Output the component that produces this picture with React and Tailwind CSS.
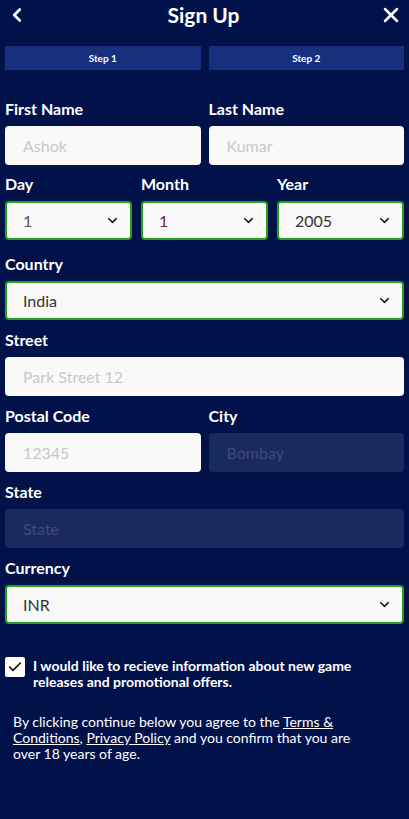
import { ChevronLeft, ChevronDown, X, Check } from 'lucide-react'

// Simple text field, optionally disabled (dark)
const Field = ({ label, placeholder, disabled }) => (
  <div className="flex-1 min-w-0">
    <label className="block text-[16px] leading-[20px] font-bold text-white mb-[7px]">{label}</label>
    <div
      className={
        'h-[39px] rounded-[4px] flex items-center pl-[18px] text-[16px] ' +
        (disabled ? 'bg-[#1a2a5f] text-[#3b4b7c]' : 'bg-[#f9f9f9] text-[#c9c9c9]')
      }
    >
      {placeholder}
    </div>
  </div>
)

// Select box with green border
const SelectBox = ({ label, value, color = 'text-[#333333]' }) => (
  <div className="flex-1 min-w-0">
    <label className="block text-[16px] leading-[20px] font-bold text-white mb-[7px]">{label}</label>
    <div className="h-[39px] rounded-[4px] border-2 border-[#27a11c] bg-[#f9f9f9] flex items-center justify-between pl-[16px] pr-[10px]">
      <span className={'text-[16px] ' + color}>{value}</span>
      <ChevronDown size={15} strokeWidth={2.5} className="text-[#222]" />
    </div>
  </div>
)

const App = () => {
  return (
    <div
      className="w-[409px] min-h-[819px] bg-[#01124b] text-white"
      style={{ fontFamily: 'Lato, "Noto Sans", sans-serif' }}
    >
      <div className="flex items-center justify-between h-[28px] pt-[2px] px-[6px]">
        <ChevronLeft size={22} strokeWidth={3} />
        <h1 className="text-[21px] font-bold">Sign Up</h1>
        <X size={24} strokeWidth={2.5} />
      </div>

      <div className="flex gap-[8px] px-[5px] mt-[18px]">
        <div className="flex-1 h-[24px] bg-[#16307e] flex items-center justify-center text-[10px] font-bold">Step 1</div>
        <div className="flex-1 h-[24px] bg-[#16307e] flex items-center justify-center text-[10px] font-bold">Step 2</div>
      </div>

      <form className="px-[5px] mt-[29px] flex flex-col">
        <div className="flex gap-[8px] mb-[9px]">
          <Field label="First Name" placeholder="Ashok" />
          <Field label="Last Name" placeholder="Kumar" />
        </div>
        <div className="flex gap-[9px] mb-[14px]">
          <SelectBox label="Day" value="1" color="text-[#555555]" />
          <SelectBox label="Month" value="1" color="text-[#6b1f5a]" />
          <SelectBox label="Year" value="2005" />
        </div>
        <div className="mb-[10px]">
          <SelectBox label="Country" value="India" />
        </div>
        <div className="mb-[10px]">
          <Field label="Street" placeholder="Park Street 12" />
        </div>
        <div className="flex gap-[8px] mb-[10px]">
          <Field label="Postal Code" placeholder="12345" />
          <Field label="City" placeholder="Bombay" disabled />
        </div>
        <div className="mb-[10px]">
          <Field label="State" placeholder="State" disabled />
        </div>
        <SelectBox label="Currency" value="INR" />
      </form>

      <div className="flex gap-[8px] px-[5px] mt-[33px]">
        <div className="w-[20px] h-[20px] shrink-0 bg-white rounded-[2px] flex items-center justify-center">
          <Check size={16} strokeWidth={2.5} className="text-[#111]" />
        </div>
        <p className="text-[14px] leading-[16px] font-bold mt-[1px]">
          I would like to recieve information about new game releases and promotional offers.
        </p>
      </div>

      <div className="pl-[13px] mt-[24px]">
        <p className="w-[358px] text-[14px] leading-[16px]">
          By clicking continue below you agree to the <a className="underline">Terms &amp; Conditions</a>,{' '}
          <a className="underline">Privacy Policy</a> and you confirm that you are over 18 years of age.
        </p>
      </div>
    </div>
  )
}

export default App
